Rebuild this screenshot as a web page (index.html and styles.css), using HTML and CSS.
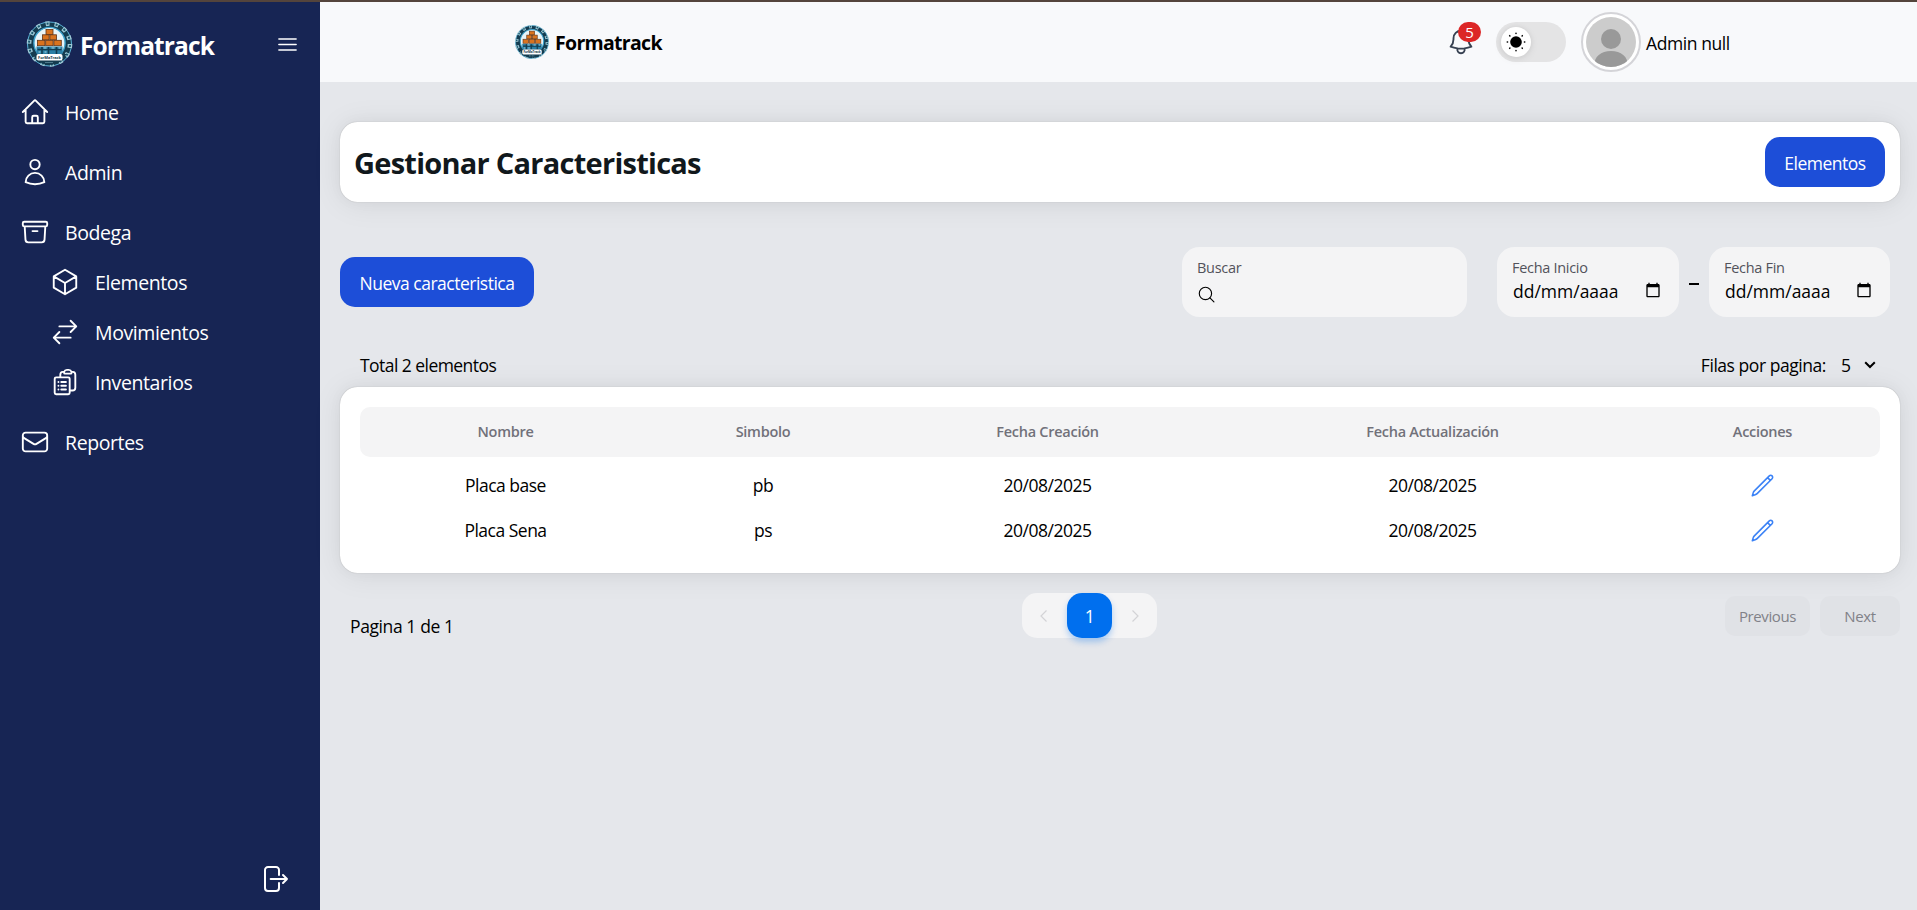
FILE: index.html
```html
<!DOCTYPE html>
<html lang="es">
<head>
<meta charset="utf-8">
<title>Formatrack</title>
<link rel="stylesheet" href="styles.css">
</head>
<body>
<svg class="defs" width="0" height="0">
  <symbol id="logo" viewBox="0 0 48 48">
    <circle cx="24" cy="24" r="22" fill="#143c50" stroke="#5bb4d8" stroke-width="1"/>
    <circle cx="24" cy="24" r="20.500" fill="none" stroke="#9fc9d6" stroke-width="4.600" stroke-dasharray="4 5.200"/>
    <circle cx="24" cy="24" r="20.500" fill="none" stroke="#17576f" stroke-width="2" stroke-dasharray="2 7.200" stroke-dashoffset="-1"/>
    <circle cx="24" cy="23" r="15.600" fill="#e9f4f8" stroke="#3da2cc" stroke-width="1.400"/>
    <g fill="#d9731f" stroke="#5f3216" stroke-width=".8">
      <rect x="20.500" y="9.500" width="7" height="5"/>
      <rect x="17" y="14.800" width="6.600" height="5"/><rect x="24.400" y="14.800" width="6.600" height="5"/>
      <rect x="12" y="20.300" width="7.400" height="5.400"/><rect x="20.200" y="20.300" width="7.400" height="5.400"/><rect x="28.400" y="20.300" width="7.400" height="5.400"/>
    </g>
    <path fill="#2a7fa5" d="M11 26.500h26v8H11z"/>
    <path stroke="#123c50" stroke-width="1.600" d="M12 29.500h24M16.500 27v7M23 27v7M31 27v7"/>
    <path stroke="#a9d9ea" stroke-width="1.200" d="M18 28h3M26 28h3M33 28h2M13 32h2M19 32h2"/>
    <path fill="#143c50" d="M7 34h34q-6 11-17 11T7 34z"/>
    <rect x="11" y="34" width="26" height="6.500" rx="2" fill="#fff"/>
    <text x="24" y="38.800" text-anchor="middle" class="logo-text">ForMaTrack</text>
    <path stroke="#88b9ca" stroke-width="1" stroke-dasharray="1 1" d="M20 42.500h8"/>
  </symbol>
  <symbol id="pencil" viewBox="0 0 24 24"><path d="m16.862 4.487 1.687-1.688a1.875 1.875 0 1 1 2.652 2.652L6.832 19.820a4.500 4.500 0 0 1-1.897 1.130l-2.685.8.8-2.685a4.500 4.500 0 0 1 1.130-1.897L16.863 4.487Zm0 0L19.500 7.125"/></symbol>
  <symbol id="calendar" viewBox="0 0 24 24"><path fill="#000" d="M20 3h-1V1h-2v2H7V1H5v2H4c-1.100 0-2 .9-2 2v16c0 1.100.9 2 2 2h16c1.100 0 2-.9 2-2V5c0-1.100-.9-2-2-2zm0 18H4V8h16v13z"/></symbol>
</svg>
<div class="topline"></div>
<div class="app">
  <aside class="sidebar">
    <div class="brand">
      <svg class="brand-logo"><use href="#logo"/></svg>
      <span class="brand-name">Formatrack</span>
      <svg class="icon menu-icon" viewBox="0 0 24 24"><path d="M3.750 6.750h16.500M3.750 12h16.500m-16.500 5.250h16.500"/></svg>
    </div>
    <nav class="nav">
      <a class="nav-item"><svg class="icon" viewBox="0 0 24 24"><path d="m2.250 12 8.954-8.955c.44-.439 1.152-.439 1.591 0L21.750 12M4.500 9.750v10.125c0 .621.504 1.125 1.125 1.125H9.750v-4.875c0-.621.504-1.125 1.125-1.125h2.250c.621 0 1.125.504 1.125 1.125V21h4.125c.621 0 1.125-.504 1.125-1.125V9.750M8.250 21h8.250"/></svg><span>Home</span></a>
      <a class="nav-item"><svg class="icon" viewBox="0 0 24 24"><path d="M15.750 6a3.750 3.750 0 1 1-7.500 0 3.750 3.750 0 0 1 7.500 0ZM4.501 20.118a7.500 7.500 0 0 1 14.998 0A17.933 17.933 0 0 1 12 21.750c-2.676 0-5.216-.584-7.499-1.632Z"/></svg><span>Admin</span></a>
      <a class="nav-item"><svg class="icon" viewBox="0 0 24 24"><path d="m20.250 7.500-.625 10.632a2.250 2.250 0 0 1-2.247 2.118H6.622a2.250 2.250 0 0 1-2.247-2.118L3.750 7.500M10 11.250h4M3.375 7.500h17.250c.621 0 1.125-.504 1.125-1.125v-1.500c0-.621-.504-1.125-1.125-1.125H3.375c-.621 0-1.125.504-1.125 1.125v1.500c0 .621.504 1.125 1.125 1.125Z"/></svg><span>Bodega</span></a>
      <div class="subnav">
        <a class="nav-item"><svg class="icon" viewBox="0 0 24 24"><path d="m21 7.500-9-5.250L3 7.500m18 0-9 5.250m9-5.250v9l-9 5.250M3 7.500l9 5.250M3 7.500v9l9 5.250m0-9v9"/></svg><span>Elementos</span></a>
        <a class="nav-item"><svg class="icon" viewBox="0 0 24 24"><path d="M7.500 21 3 16.500m0 0L7.500 12M3 16.500h13.500m0-13.500L21 7.500m0 0L16.500 12M21 7.500H7.500"/></svg><span>Movimientos</span></a>
        <a class="nav-item"><svg class="icon" viewBox="0 0 24 24"><path d="M9 12h3.750M9 15h3.750M9 18h3.750m3 .75H18a2.250 2.250 0 0 0 2.250-2.250V6.108c0-1.135-.845-2.098-1.976-2.192a48.424 48.424 0 0 0-1.123-.08m-5.801 0c-.065.210-.1.433-.1.664 0 .414.336.75.75.75h4.500a.75.75 0 0 0 .75-.75 2.250 2.250 0 0 0-.1-.664m-5.800 0A2.251 2.251 0 0 1 13.500 2.250H15c1.012 0 1.867.668 2.150 1.586m-5.800 0c-.376.023-.75.050-1.124.080C9.095 4.010 8.250 4.973 8.250 6.108V8.250m0 0H4.875c-.621 0-1.125.504-1.125 1.125v11.250c0 .621.504 1.125 1.125 1.125h9.750c.621 0 1.125-.504 1.125-1.125V9.375c0-.621-.504-1.125-1.125-1.125H8.250ZM6.750 12h.008v.008H6.750V12Zm0 3h.008v.008H6.750V15Zm0 3h.008v.008H6.750V18Z"/></svg><span>Inventarios</span></a>
      </div>
      <a class="nav-item"><svg class="icon" viewBox="0 0 24 24"><path d="M21.750 6.750v10.500a2.250 2.250 0 0 1-2.250 2.250h-15a2.250 2.250 0 0 1-2.250-2.250V6.750m19.500 0A2.250 2.250 0 0 0 19.500 4.500h-15a2.250 2.250 0 0 0-2.250 2.250m19.500 0v.243a2.250 2.250 0 0 1-1.070 1.916l-7.500 4.615a2.250 2.250 0 0 1-2.360 0L3.320 8.910a2.250 2.250 0 0 1-1.070-1.916V6.750"/></svg><span>Reportes</span></a>
    </nav>
    <svg class="icon logout" viewBox="0 0 24 24"><path d="M15.750 9V5.250A2.250 2.250 0 0 0 13.500 3h-6a2.250 2.250 0 0 0-2.250 2.250v13.500A2.250 2.250 0 0 0 7.500 21h6a2.250 2.250 0 0 0 2.250-2.250V15M18.750 15l3-3m0 0-3-3m3 3H9.500"/></svg>
  </aside>

  <div class="page">
    <header class="header">
      <div class="header-brand">
        <svg class="header-logo"><use href="#logo"/></svg>
        <span class="header-name">Formatrack</span>
      </div>
      <div class="header-tools">
        <div class="bell">
          <svg class="icon bell-icon" viewBox="0 0 24 24"><path d="M14.857 17.082a23.848 23.848 0 0 0 5.454-1.310A8.967 8.967 0 0 1 18 9.750V9A6 6 0 0 0 6 9v.75a8.967 8.967 0 0 1-2.312 6.022c1.733.64 3.560 1.085 5.455 1.310m5.714 0a24.255 24.255 0 0 1-5.714 0m5.714 0a3 3 0 1 1-5.714 0"/></svg>
          <span class="badge">5</span>
        </div>
        <div class="switch"><div class="thumb"><svg width="20" height="20" viewBox="0 0 24 24"><circle cx="12" cy="12" r="7"/><g stroke="#000" stroke-width="1.800" stroke-linecap="round"><path d="M12 1.500v.4M12 22.100v.4M1.500 12h.4M22.100 12h.4M4.400 4.400l.3.300M19.300 19.300l.3.300M4.400 19.600l.3-.3M19.300 4.700l.3-.3"/></g></svg></div></div>
        <div class="user">
          <div class="avatar"><svg viewBox="0 0 50 50"><rect width="50" height="50" fill="#ccc"/><circle cx="25" cy="22" r="10" fill="#999"/><path fill="#999" d="M8 50c0-11 7-16 17-16s17 5 17 16z"/></svg></div>
          <span class="user-name">Admin null</span>
        </div>
      </div>
    </header>

    <main class="main">
      <section class="card title-card">
        <h1 class="title">Gestionar Caracteristicas</h1>
        <button class="btn btn-elementos">Elementos</button>
      </section>

      <section class="toolbar">
        <button class="btn btn-nueva">Nueva caracteristica</button>
        <div class="filters">
          <div class="field search">
            <span class="label">Buscar</span>
            <svg class="search-icon" viewBox="0 0 24 24"><circle cx="10.500" cy="10.500" r="8.700"/><path d="m16.800 16.800 5.700 5.700"/></svg>
          </div>
          <div class="field date">
            <span class="label">Fecha Inicio</span>
            <div class="date-row"><span class="date-text">dd/mm/aaaa</span><svg class="cal"><use href="#calendar"/></svg></div>
          </div>
          <span class="dash"></span>
          <div class="field date date-end">
            <span class="label">Fecha Fin</span>
            <div class="date-row"><span class="date-text">dd/mm/aaaa</span><svg class="cal"><use href="#calendar"/></svg></div>
          </div>
        </div>
      </section>

      <section class="summary">
        <span class="total">Total 2 elementos</span>
        <div class="rows-select"><span class="rows-label">Filas por pagina:</span><span class="rows-value">5</span><svg class="chev" viewBox="0 0 12 8"><path d="M1.200 1.200 6 6l4.800-4.800"/></svg></div>
      </section>

      <section class="card table">
        <div class="row head"><span>Nombre</span><span>Simbolo</span><span>Fecha Creación</span><span>Fecha Actualización</span><span>Acciones</span></div>
        <div class="row"><span>Placa base</span><span>pb</span><span>20/08/2025</span><span>20/08/2025</span><span><svg class="icon edit"><use href="#pencil"/></svg></span></div>
        <div class="row"><span>Placa Sena</span><span>ps</span><span>20/08/2025</span><span>20/08/2025</span><span><svg class="icon edit"><use href="#pencil"/></svg></span></div>
      </section>

      <footer class="footer">
        <span class="page-info">Pagina 1 de 1</span>
        <div class="pager">
          <svg class="pg" viewBox="0 0 16 16"><path d="M10.500 2.500 5 8l5.500 5.500"/></svg>
          <span class="current">1</span>
          <svg class="pg" viewBox="0 0 16 16"><path d="M5.500 2.500 11 8l-5.500 5.500"/></svg>
        </div>
        <div class="steps"><span class="step prev">Previous</span><span class="step next">Next</span></div>
      </footer>
    </main>
  </div>
</div>
</body>
</html>
```
FILE: styles.css
```css
* { box-sizing: border-box; margin: 0; padding: 0; }
body {
  height: 910px;
  overflow: hidden;
  display: flex;
  flex-direction: column;
  background: #e5e7eb;
  color: #000;
  font: 17.500px/26px "Open Sans", "Noto Sans", sans-serif;
  letter-spacing: -.5px;
}
span, h1 { white-space: nowrap; }
.defs { position: absolute; }
.topline { height: 2px; background: #54443c; }
.app { display: flex; flex: 1; }
.icon { fill: none; stroke: currentColor; stroke-width: 1.5; stroke-linecap: round; stroke-linejoin: round; width: 30px; height: 30px; flex: none; }
.logo-text { font-size: 4px; line-height: 5px; font-weight: 700; fill: #16394a; letter-spacing: -.1px; }

.sidebar { width: 320px; background: #172554; color: #fff; display: flex; flex-direction: column; }
.brand { height: 80px; padding: 4px 20px 0 25px; display: flex; align-items: center; }
.brand-logo { width: 49px; height: 48px; }
.brand-name { margin: 3px 0 0 6px; font-size: 24.500px; line-height: 34px; font-weight: 700; letter-spacing: -.9px; }
.menu-icon { width: 25px; height: 25px; margin-left: auto; }
.nav { display: flex; flex-direction: column; }
.nav-item { display: flex; align-items: center; gap: 15px; height: 60px; padding-left: 20px; font-size: 19.500px; letter-spacing: -.4px; }
.nav-item span { padding-top: 2px; }
.subnav { padding-left: 30px; margin: -5px 0 5px; }
.subnav .nav-item { height: 50px; }
.logout { width: 32px; height: 32px; margin: auto 30px 15px auto; }

.page { flex: 1; display: flex; flex-direction: column; }
.header { height: 80px; background: #f8f9fb; display: flex; justify-content: space-between; padding: 0 187px 0 194px; }
.header-brand { display: flex; align-items: center; }
.header-logo { width: 36px; height: 36px; }
.header-name { font-size: 19.500px; font-weight: 700; margin-left: 5px; padding-top: 2px; letter-spacing: -.7px; }
.header-tools { display: flex; align-items: center; }
.bell { position: relative; width: 30px; height: 30px; margin-right: 20px; color: #374151; }
.bell-icon { display: block; }
.badge { position: absolute; left: 12px; top: -5px; width: 23px; height: 20px; border-radius: 10px; background: #dc2626; color: #fff; font-size: 15px; line-height: 21px; text-align: center; letter-spacing: 0; }
.switch { width: 70px; height: 40px; border-radius: 20px; background: #e4e4e5; padding: 5px; margin-right: 15px; }
.thumb { width: 30px; height: 30px; border-radius: 50%; background: #fff; display: grid; place-items: center; box-shadow: 0 0 5px rgba(0,0,0,.06), 0 2px 8px rgba(0,0,0,.08); }
.user { display: flex; align-items: center; }
.avatar { width: 60px; height: 60px; border: 2px solid #d4d4d8; border-radius: 50%; padding: 3px; background: #fff; }
.avatar svg { width: 50px; height: 50px; border-radius: 50%; display: block; }
.user-name { margin-left: 5px; padding-top: 2px; width: 84px; letter-spacing: -.42px; }

.main { padding: 40px 17px 0 20px; display: flex; flex-direction: column; }
.card { background: #fff; border-radius: 17.500px; box-shadow: 0 0 15px rgba(0,0,0,.03), 0 2px 30px rgba(0,0,0,.08), 0 0 1px rgba(0,0,0,.3); }
.title-card { height: 80px; padding: 0 15px; display: flex; align-items: center; justify-content: space-between; }
.title { font-size: 29px; line-height: 40px; font-weight: 700; letter-spacing: -.74px; color: #11181c; padding-top: 1px; margin-left: -1px; }
.btn { height: 50px; border: 0; border-radius: 15px; background: #1d4ed8; color: #fff; font: inherit; letter-spacing: -.5px; padding-top: 2px; }
.btn-elementos { width: 120px; }
.btn-nueva { width: 194px; }
.toolbar { margin-top: 45px; height: 70px; padding-right: 10px; display: flex; align-items: center; justify-content: space-between; }
.filters { display: flex; align-items: center; }
.field { height: 70px; border-radius: 17.500px; background: #f4f4f5; padding: 10px 15px; display: flex; flex-direction: column; }
.label { font-size: 14.500px; line-height: 21px; color: #52525b; letter-spacing: -.3px; }
.search { width: 285px; margin-right: 30px; }
.search-icon { width: 17px; height: 17px; margin: 8px 0 0 1px; fill: none; stroke: #000; stroke-width: 1.6; stroke-linecap: round; }
.date { width: 182px; }
.date-end { width: 181px; }
.date-row { display: flex; align-items: center; justify-content: space-between; margin-top: 1px; padding: 0 3px 0 1px; }
.date-text { line-height: 24px; letter-spacing: 0; }
.cal { width: 16px; height: 16px; margin-top: -3px; }
.dash { width: 10px; height: 1.5px; margin: 4px 10px 0 10px; background: #000; }
.summary { margin-top: 35px; height: 35px; padding: 0 24px 0 20px; display: flex; justify-content: space-between; line-height: 27px; }
.total { letter-spacing: -.55px; }
.rows-select { display: flex; }
.rows-label { letter-spacing: -.45px; }
.rows-value { margin-left: 15px; width: 23px; }
.chev { width: 12px; height: 8px; margin-top: 9px; fill: none; stroke: #000; stroke-width: 2; }
.table { height: 186px; padding: 20px; }
.row { display: grid; grid-template-columns: 291px 224px 345px 425px 235px; height: 45px; align-items: center; text-align: center; }
.head { height: 50px; border-radius: 10px; background: #f4f4f5; color: #71717a; font-size: 14.500px; font-weight: 600; letter-spacing: -.27px; margin-bottom: 5px; }
.edit { width: 25px; height: 25px; color: #3b82f6; vertical-align: middle; }
.footer { margin-top: 20px; height: 60px; display: grid; grid-template-columns: 682px 135px 1fr; align-items: start; }
.page-info { padding-left: 10px; margin-top: 20px; letter-spacing: -.4px; }
.pager { height: 45px; border-radius: 15px; background: #f4f4f5; display: flex; align-items: center; justify-content: space-between; }
.pg { width: 16px; height: 16px; margin: 0 14px; fill: none; stroke: #d3d3d6; stroke-width: 1.2; }
.current { width: 45px; height: 45px; border-radius: 15px; background: #006fee; color: #fff; line-height: 47px; text-align: center; box-shadow: 0 4px 6px rgba(0,111,238,.3); }
.steps { display: flex; gap: 10px; justify-content: flex-end; padding-top: 3px; }
.step { height: 40px; line-height: 41px; border-radius: 10px; background: #e0e2e6; color: #818188; font-size: 15px; letter-spacing: -.4px; text-align: center; }
.prev { width: 85px; }
.next { width: 80px; }
```
